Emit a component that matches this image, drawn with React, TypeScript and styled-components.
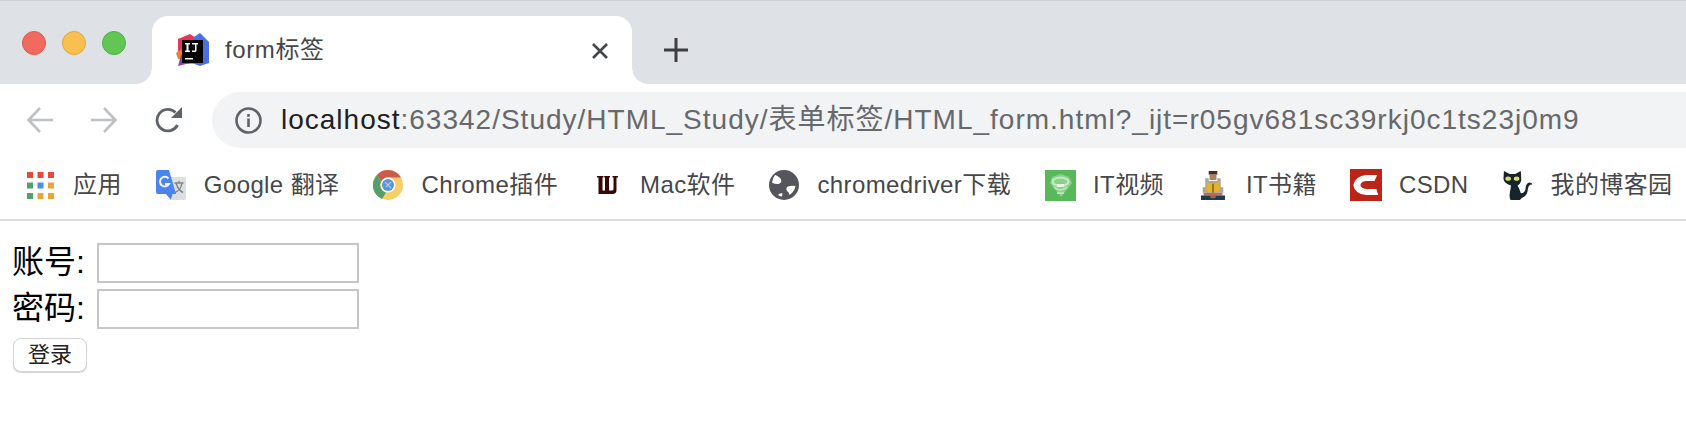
import React from 'react';
import styled, { createGlobalStyle } from 'styled-components';

const CJK = '"Noto Sans CJK SC"';
const UI_FONT = `"Liberation Sans", ${CJK}, sans-serif`;

const GlobalStyle = createGlobalStyle`
  html, body {
    margin: 0;
    padding: 0;
    background: #ffffff;
    overflow: hidden;
  }
`;

const Page = styled.div`
  width: 1686px;
  height: 434px;
  display: flex;
  flex-direction: column;
  font-family: ${UI_FONT};
`;

/* tab strip */

const TabStrip = styled.div`
  height: 84px;
  box-sizing: border-box;
  flex: none;
  display: flex;
  align-items: flex-start;
  background: #dee1e6;
  border-top: 1px solid #cfd0d3;
  padding-left: 22px;
`;

const Lights = styled.div`
  display: flex;
  gap: 16px;
  margin-top: 30px;
  width: 130px;
`;

const Light = styled.span<{ $fill: string; $edge: string }>`
  width: 24px;
  height: 24px;
  box-sizing: border-box;
  border-radius: 50%;
  background: ${(p) => p.$fill};
  border: 1px solid ${(p) => p.$edge};
`;

const Tab = styled.div`
  position: relative;
  width: 480px;
  height: 68px;
  margin-top: 15px;
  box-sizing: border-box;
  padding: 17px 24px 0 24px;
  display: flex;
  align-items: flex-start;
  background: #ffffff;
  border-radius: 16px 16px 0 0;

  &::before,
  &::after {
    content: '';
    position: absolute;
    bottom: 0;
    width: 16px;
    height: 16px;
  }
  &::before {
    left: -16px;
    background: radial-gradient(circle at 0 0, #dee1e6 15.5px, #ffffff 16px);
  }
  &::after {
    right: -16px;
    background: radial-gradient(circle at 100% 0, #dee1e6 15.5px, #ffffff 16px);
  }
`;

const TabTitle = styled.span`
  margin: 3px 0 0 15px;
  flex: 1;
  font-size: 24px;
  line-height: 28px;
  letter-spacing: 0.6px;
  color: #45474a;
`;

const TabClose = styled.svg`
  margin-top: 10px;
`;

const NewTab = styled.svg`
  margin: 37px 0 0 32px;
`;

/* toolbar */

const Toolbar = styled.div`
  height: 71px;
  flex: none;
  box-sizing: border-box;
  padding: 8px 0 7px 27px;
  display: flex;
  align-items: center;
  background: #ffffff;
`;

const NavButtons = styled.div`
  display: flex;
  align-items: center;
  gap: 38px;
  width: 185px;
`;

const AddressBar = styled.div`
  flex: 1;
  height: 56px;
  display: flex;
  align-items: center;
  gap: 19px;
  padding-left: 23px;
  background: #f1f3f4;
  border-radius: 28px 0 0 28px;
`;

const Url = styled.div`
  font-size: 28px;
  line-height: 32px;
  letter-spacing: 1px;
  color: #66686b;
  white-space: nowrap;
`;

const Host = styled.span`
  color: #1f2022;
`;

/* bookmarks */

const BookmarkBar = styled.div`
  height: 66px;
  flex: none;
  box-sizing: border-box;
  padding: 0 0 4px 24px;
  display: flex;
  align-items: center;
  gap: 33px;
  background: #ffffff;
  border-bottom: 2px solid #dcdde0;
`;

const Bookmark = styled.div`
  display: flex;
  align-items: center;
  gap: 17px;
  font-size: 24px;
  line-height: 30px;
  letter-spacing: 0.4px;
  color: #45474a;
  white-space: nowrap;
`;

const IconSlot = styled.span`
  width: 32px;
  display: flex;
  justify-content: center;
  align-items: center;
`;

/* page content */

const Content = styled.form`
  flex: 1;
  padding: 22px 0 0 12px;
  color: #000000;
`;

const Row = styled.div`
  display: flex;
  align-items: center;
  height: 40px;
  margin-bottom: 6px;
  font-size: 32px;
`;

const FieldLabel = styled.label`
  width: 85px;
  line-height: 40px;
  padding-bottom: 3px;
`;

const TextInput = styled.input`
  width: 262px;
  height: 40px;
  box-sizing: border-box;
  border: 2px solid #c6c6c6;
  background: #ffffff;
  padding: 0;
  outline: none;
`;

const Submit = styled.button`
  display: block;
  width: 74px;
  height: 34px;
  margin: 9px 0 0 1px;
  padding: 0;
  box-sizing: border-box;
  background: #ffffff;
  border: 1px solid #d4d4d4;
  border-radius: 8px;
  box-shadow: 0 1px 1px rgba(0, 0, 0, 0.18);
  font-size: 22px;
  line-height: 30px;
  color: #222222;
  font-family: ${UI_FONT};
`;

/* icons */

function IdeaIcon() {
  return (
    <svg width="34" height="34" viewBox="0 0 34 34">
      <path d="M2 6 L14 1 L20 5 L18 26 L5 32 L2 18Z" fill="#e8355f" />
      <path d="M0 20 L6 16 L8 26 L2 26Z" fill="#f08030" />
      <path d="M2 33 L5 22 L22 30 L10 31Z" fill="#9a3ab8" />
      <path d="M18 4 L24 0 L33 9 L33 30 L24 33 L16 30Z" fill="#4a6fe0" />
      <rect x="6" y="7" width="21" height="23" fill="#000000" />
      <path d="M9 10h5v1.5h-1.5v6H14V19H9v-1.5h1.5v-6H9zM16 10h6v1.5h-1.5v6q0 1.5-2 1.5H16v-1.5h2.5q.5 0 .5-.5v-5.500h-3z" fill="#ffffff" />
      <rect x="9" y="25" width="8" height="1.500" fill="#ffffff" />
    </svg>
  );
}

function AppsIcon() {
  const colors = ['#e64a3b', '#e64a3b', '#e64a3b', '#55a06a', '#4a90e8', '#e9a53a', '#55a06a', '#e9a53a', '#e9a53a'];
  return (
    <svg width="27" height="27" viewBox="0 0 27 27">
      {colors.map((fill, i) => (
        <rect key={i} x={(i % 3) * 10.5} y={Math.floor(i / 3) * 10.500} width="6" height="6" fill={fill} />
      ))}
    </svg>
  );
}

function TranslateIcon() {
  return (
    <svg width="30" height="30" viewBox="0 0 30 30">
      <path d="M13 7 H28 Q30 7 30 9 V28 Q30 30 28 30 H16Z" fill="#dcdedf" />
      <path d="M18.500 13 h9 M23 11 v2 M20 13 q2 7 7 9.500 M26 13 q-1 7 -7 9.500" fill="none" stroke="#7f888e" strokeWidth="1.400" />
      <path d="M2 0 H13 L20 24 H16.500 L15 30 L10 24 H2 Q0 24 0 22 V2 Q0 0 2 0Z" fill="#4c84ee" />
      <path d="M12.500 8.500 A4.800 4.800 0 1 0 13 14 H9" fill="none" stroke="#f2f5fd" strokeWidth="2" />
    </svg>
  );
}

function ChromeIcon() {
  return (
    <svg width="30" height="30" viewBox="0 0 30 30">
      <circle cx="15" cy="15" r="15" fill="#f6cf66" />
      <path d="M15 0 A15 15 0 0 1 28 7.500 L15 7.500 A7.500 7.500 0 0 0 8 12 L4.400 4.400 A15 15 0 0 1 15 0Z" fill="#cb5c4c" />
      <path d="M4.400 4.400 L8 12 A7.500 7.500 0 0 0 13 22.500 L9 29 A15 15 0 0 1 4.400 4.400Z" fill="#55a06a" />
      <circle cx="15" cy="15" r="7.500" fill="#ffffff" />
      <circle cx="15" cy="15" r="6" fill="#5a94d8" />
      <path d="M12 12 L18 18 M18 12 L13 17" stroke="#a8c8ec" strokeWidth="1.200" />
    </svg>
  );
}

function MacIcon() {
  return (
    <svg width="21" height="18" viewBox="0 0 21 18">
      <path d="M0 0 H6.500 V1.500 H5.500 V14.500 H8 V1.500 H7.200 V0 H13 V1.500 H12 V14.500 H15 Q16.500 14.500 16.500 13 V1.500 H15.500 V0 H21 V1.500 H19.500 V14 Q19.500 18 15.500 18 H1.500 V1.500 H0Z" fill="#360808" />
    </svg>
  );
}

function GlobeIcon() {
  return (
    <svg width="30" height="30" viewBox="0 0 30 30">
      <circle cx="15" cy="15" r="15" fill="#54565b" />
      <path d="M6 5 Q10.500 6.500 12 9.500 Q13 13 9.500 14 Q6 14.500 3 12.500 Q3.500 8 6 5Z M18 17 Q22 15 26.500 16 Q25.500 21.500 20.500 25 Q20 22 18 21 Q16.500 19 18 17Z M9 25 Q11 22.500 13.500 23.500 L13 26.500 Q11 26.500 9 25Z" fill="#ffffff" />
    </svg>
  );
}

function VideoIcon() {
  return (
    <svg width="31" height="31" viewBox="0 0 31 31">
      <rect width="31" height="31" fill="#58b85a" />
      <path d="M7 7 L15.500 4 L24 7 L27 13 L16 27 L5 13Z" fill="#8dd08e" />
      <path d="M8 10 Q15.500 5 23 10 Q25 15 15.500 16 Q6 15 8 10Z" fill="none" stroke="#c6e9c6" strokeWidth="2" />
      <rect x="12" y="14" width="7" height="3" fill="#e4f5e4" />
      <path d="M9 17 Q15.500 23 22 17 M12 23 H19" fill="none" stroke="#b6e3b6" strokeWidth="1.800" />
    </svg>
  );
}

function ReaderIcon() {
  return (
    <svg width="24" height="29" viewBox="0 0 28 32" preserveAspectRatio="none">
      <rect x="9" y="0" width="10" height="4" fill="#4a3024" />
      <rect x="10" y="4" width="8" height="6" fill="#b07f5e" />
      <path d="M5 8 H9 V11 H19 V8 H23 V18 H26 V24 H2 V18 H5Z" fill="#a9a79a" />
      <path d="M7 12 L14 14 L21 12 L22 22 L14 24 L6 22Z" fill="#e4b22c" />
      <rect x="13" y="14" width="2" height="10" fill="#8a6a20" />
      <rect x="3" y="24" width="22" height="3" fill="#b86e54" />
      <rect x="0" y="27" width="28" height="5" fill="#1d3c52" />
      <rect x="11" y="27" width="6" height="3" fill="#a86048" />
    </svg>
  );
}

function CsdnIcon() {
  return (
    <svg width="32" height="32" viewBox="0 0 34 32" preserveAspectRatio="none">
      <rect width="34" height="32" fill="#bd2418" />
      <path d="M29 6 H17 Q6 7 3.500 16 Q5 25 17 26 H30 L28 20 H18 Q12 20 11 16 Q12 12 18 12 H26Z" fill="#ffffff" />
    </svg>
  );
}

function CatIcon() {
  return (
    <svg width="30" height="29" viewBox="0 0 32 30" preserveAspectRatio="none">
      <path d="M1 0 L7 3 H13 L19 0 L19.500 9 Q19 13 15.500 15 Q18 19 19 23 Q23 23 24 19 Q24 13 28 12 Q31 12 31 14 Q27 14 26.500 19 Q26 26 20 28 L18 30 H8 Q6 26 8 19 L8.500 15 Q1 13 0.500 8Z" fill="#17242b" />
      <ellipse cx="5.500" cy="8" rx="3" ry="2.200" fill="#d6dc70" />
      <ellipse cx="14.500" cy="8" rx="3" ry="2.200" fill="#d6dc70" />
    </svg>
  );
}

const bookmarks: { label: string; icon: React.ReactNode }[] = [
  { label: '应用', icon: <AppsIcon /> },
  { label: 'Google 翻译', icon: <TranslateIcon /> },
  { label: 'Chrome插件', icon: <ChromeIcon /> },
  { label: 'Mac软件', icon: <MacIcon /> },
  { label: 'chromedriver下载', icon: <GlobeIcon /> },
  { label: 'IT视频', icon: <VideoIcon /> },
  { label: 'IT书籍', icon: <ReaderIcon /> },
  { label: 'CSDN', icon: <CsdnIcon /> },
  { label: '我的博客园', icon: <CatIcon /> },
];

export default function App() {
  return (
    <Page>
      <GlobalStyle />
      <TabStrip>
        <Lights>
          <Light $fill="#f2695f" $edge="#dc5a50" />
          <Light $fill="#f9bf4f" $edge="#dfa63e" />
          <Light $fill="#62c655" $edge="#52ad46" />
        </Lights>
        <Tab>
          <IdeaIcon />
          <TabTitle>form标签</TabTitle>
          <TabClose width="16" height="16" viewBox="0 0 16 16">
            <path d="M1 1 L15 15 M15 1 L1 15" stroke="#45474a" strokeWidth="2.600" />
          </TabClose>
        </Tab>
        <NewTab width="24" height="24" viewBox="0 0 24 24">
          <path d="M12 0 V24 M0 12 H24" stroke="#3c3e42" strokeWidth="3" />
        </NewTab>
      </TabStrip>
      <Toolbar>
        <NavButtons>
          <svg width="26" height="26" viewBox="0 0 26 26">
            <path d="M26 13 H2 M13 1 L1.500 13 L13 25" fill="none" stroke="#bdc0c3" strokeWidth="2.600" />
          </svg>
          <svg width="26" height="26" viewBox="0 0 26 26">
            <path d="M0 13 H24 M13 1 L24.500 13 L13 25" fill="none" stroke="#bdc0c3" strokeWidth="2.600" />
          </svg>
          <svg width="27" height="27" viewBox="0 0 27 27">
            <path d="M22.500 18 A10.800 10.800 0 1 1 20.500 5.500" fill="none" stroke="#5f6368" strokeWidth="2.800" />
            <path d="M27 0 V11 H16Z" fill="#5f6368" />
          </svg>
        </NavButtons>
        <AddressBar>
          <svg width="27" height="27" viewBox="0 0 27 27">
            <circle cx="13.500" cy="13.500" r="12" fill="none" stroke="#5f6368" strokeWidth="2.600" />
            <rect x="12.200" y="7" width="2.600" height="2.800" fill="#5f6368" />
            <rect x="12.200" y="11.500" width="2.600" height="8.500" fill="#5f6368" />
          </svg>
          <Url>
            <Host>localhost</Host>:63342/Study/HTML_Study/表单标签/HTML_form.html?_ijt=r05gv681sc39rkj0c1ts23j0m9
          </Url>
        </AddressBar>
      </Toolbar>
      <BookmarkBar>
        {bookmarks.map((b) => (
          <Bookmark key={b.label}>
            <IconSlot>{b.icon}</IconSlot>
            {b.label}
          </Bookmark>
        ))}
      </BookmarkBar>
      <Content onSubmit={(e) => e.preventDefault()}>
        <Row>
          <FieldLabel htmlFor="account">账号:</FieldLabel>
          <TextInput id="account" type="text" />
        </Row>
        <Row>
          <FieldLabel htmlFor="password">密码:</FieldLabel>
          <TextInput id="password" type="password" />
        </Row>
        <Submit type="submit">登录</Submit>
      </Content>
    </Page>
  );
}
